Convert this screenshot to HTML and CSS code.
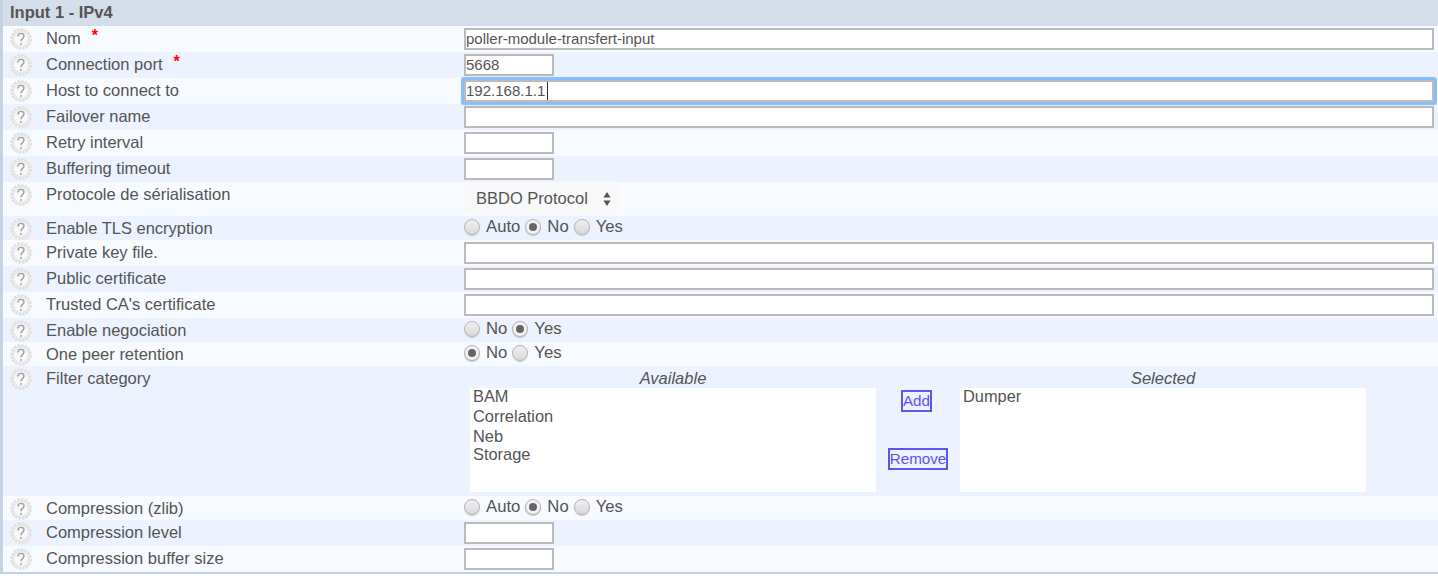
FILE: index.html
```html
<!DOCTYPE html>
<html lang="fr">
<head>
<meta charset="utf-8">
<title>Input 1 - IPv4</title>
<link rel="stylesheet" href="styles.css">
</head>
<body>
<svg class="defs" width="0" height="0" aria-hidden="true">
  <symbol id="help" viewBox="0 0 22 22">
    <circle cx="11" cy="11" r="9.5" fill="#f2f2f2" stroke="#e0e0e0" stroke-width="2.6" stroke-dasharray="2.6 1.1"/>
    <circle cx="11" cy="11" r="7.4" fill="#f9f9f9" stroke="#e2e2e2" stroke-width=".9"/>
    <path d="M8 8.4c0-1.9 1.2-3 3-3s3 1.1 3 2.6c0 2.3-3 2.5-3 5.2" fill="none" stroke="#a0a0a0" stroke-width="1.4"/>
    <circle cx="11" cy="16" r="1" fill="#a0a0a0"/>
  </symbol>
</svg>
<main class="form">
  <h1 class="head">Input 1 - IPv4</h1>

  <div class="row light"><div class="label"><svg class="help"><use href="#help"/></svg><span>Nom</span><b class="req">*</b></div><div class="value"><input class="wide" value="poller-module-transfert-input"></div></div>
  <div class="row dark"><div class="label"><svg class="help"><use href="#help"/></svg><span>Connection port</span><b class="req">*</b></div><div class="value"><input class="small" value="5668"></div></div>
  <div class="row light"><div class="label"><svg class="help"><use href="#help"/></svg><span>Host to connect to</span></div><div class="value"><input class="wide focused" value="192.168.1.1"><i class="caret"></i></div></div>
  <div class="row dark"><div class="label"><svg class="help"><use href="#help"/></svg><span>Failover name</span></div><div class="value"><input class="wide"></div></div>
  <div class="row light"><div class="label"><svg class="help"><use href="#help"/></svg><span>Retry interval</span></div><div class="value"><input class="small"></div></div>
  <div class="row dark"><div class="label"><svg class="help"><use href="#help"/></svg><span>Buffering timeout</span></div><div class="value"><input class="small"></div></div>

  <div class="row light tall"><div class="label"><svg class="help"><use href="#help"/></svg><span>Protocole de sérialisation</span></div>
    <div class="value"><div class="selectbox"><span>BBDO Protocol</span><svg class="updown" viewBox="0 0 8 14"><path d="M4 0l3.6 5.4H.4zM4 14L.4 8.6h7.2z" fill="#555"/></svg></div></div></div>

  <div class="row dark short"><div class="label low"><svg class="help"><use href="#help"/></svg><span>Enable TLS encryption</span></div>
    <div class="value radios"><i class="radio"></i><span>Auto</span><i class="radio on"></i><span>No</span><i class="radio"></i><span>Yes</span></div></div>

  <div class="row light"><div class="label"><svg class="help"><use href="#help"/></svg><span>Private key file.</span></div><div class="value"><input class="wide"></div></div>
  <div class="row dark"><div class="label"><svg class="help"><use href="#help"/></svg><span>Public certificate</span></div><div class="value"><input class="wide"></div></div>
  <div class="row light"><div class="label"><svg class="help"><use href="#help"/></svg><span>Trusted CA's certificate</span></div><div class="value"><input class="wide"></div></div>

  <div class="row dark short"><div class="label low"><svg class="help"><use href="#help"/></svg><span>Enable negociation</span></div>
    <div class="value radios"><i class="radio"></i><span>No</span><i class="radio on"></i><span>Yes</span></div></div>
  <div class="row light short"><div class="label low"><svg class="help"><use href="#help"/></svg><span>One peer retention</span></div>
    <div class="value radios"><i class="radio on"></i><span>No</span><i class="radio"></i><span>Yes</span></div></div>

  <div class="row dark filter"><div class="label"><svg class="help"><use href="#help"/></svg><span>Filter category</span></div>
    <div class="value transfer">
      <div class="pane">
        <em>Available</em>
        <ul class="list"><li>BAM</li><li>Correlation</li><li>Neb</li><li>Storage</li></ul>
      </div>
      <div class="moves"><button class="move add">Add</button><button class="move">Remove</button></div>
      <div class="pane">
        <em>Selected</em>
        <ul class="list"><li>Dumper</li></ul>
      </div>
    </div></div>

  <div class="row light short"><div class="label low"><svg class="help"><use href="#help"/></svg><span>Compression (zlib)</span></div>
    <div class="value radios"><i class="radio"></i><span>Auto</span><i class="radio on"></i><span>No</span><i class="radio"></i><span>Yes</span></div></div>
  <div class="row dark"><div class="label"><svg class="help"><use href="#help"/></svg><span>Compression level</span></div><div class="value"><input class="small"></div></div>
  <div class="row light"><div class="label"><svg class="help"><use href="#help"/></svg><span>Compression buffer size</span></div><div class="value"><input class="small"></div></div>
</main>
</body>
</html>
```

FILE: styles.css
```css
* { box-sizing: border-box; }
html, body { margin: 0; padding: 0; background: #fff; }
body { font-family: "Liberation Sans", Arial, sans-serif; color: #555; font-size: 16.5px; overflow: hidden; }
.defs { display: block; height: 0; }

.form {
  width: 1438px;
  border-left: 3px solid #c3d2e5;
  border-bottom: 2px solid #c3d2e5;
  height: 574px;
}
.head {
  margin: 0;
  height: 26px;
  background: #d4deea;
  font-size: 16.5px;
  font-weight: bold;
  line-height: 24px;
  padding-left: 7px;
  color: #555;
}
.row { display: flex; height: 26px; }
.light { background: #f7faff; }
.dark { background: #ecf2fe; }
.tall { height: 34px; }
.short { height: 24px; }
.filter { height: 130px; }

.label { width: 461px; flex: none; display: flex; align-items: flex-start; height: 26px; padding-top: 3px; line-height: 19px; }
.help { width: 22px; height: 22px; margin: -1px 14px 0 7px; flex: none; position: relative; }
.req { color: #f00; margin-left: 11px; font-size: 16px; line-height: 14px; }

.value { flex: 1; display: flex; align-items: flex-start; padding-top: 2px; position: relative; }
input {
  display: block;
  height: 22px;
  border: 2px solid #bbb;
  background: #fff;
  padding: 0 0 2px;
  font: 15px "Liberation Sans", Arial, sans-serif;
  color: #555;
  outline: none;
  border-radius: 0;
}
.wide { width: 970px; }
.small { width: 90px; }
.focused { box-shadow: 0 0 1px 3px #86bdfb; border-radius: 1px; }
.caret { position: absolute; left: 83px; top: 4px; width: 1px; height: 18px; background: #333; }

.selectbox {
  width: 156px;
  height: 31px;
  margin-top: -1px;
  background: #f8f8f8;
  border-radius: 7px;
  display: flex;
  align-items: center;
  padding-left: 12px;
  font-size: 16.5px;
}
.updown { width: 8px; height: 14px; margin-left: 15px; }

.radios { align-items: center; padding-top: 0; padding-bottom: 3px; font-size: 16.7px; }
.radio {
  width: 16px;
  height: 16px;
  border-radius: 50%;
  border: 1px solid #b4b4b4;
  background: linear-gradient(#f0f0f0, #d8d8d8);
  box-shadow: 0 1px 1px #ccc;
  margin-right: 6px;
  position: relative;
  flex: none;
}
.radio.on { background: #f2f2f2; }
.radio.on::after {
  content: "";
  position: absolute;
  left: 3px; top: 3px;
  width: 8px; height: 8px;
  border-radius: 50%;
  background: #666;
}
.radios span { margin-right: 5px; }

.transfer { padding-top: 3px; padding-left: 6px; }
.pane { width: 406px; flex: none; display: flex; flex-direction: column; }
.pane em { display: block; text-align: center; line-height: 19px; height: 19px; font-size: 16.5px; }
.list {
  list-style: none;
  margin: 0;
  padding: 0 3px;
  height: 104px;
  background: #fff;
  font-size: 16.4px;
}
.list li { height: 20px; line-height: 16px; }
.list li:nth-child(4) { margin-top: -2px; }
.moves { width: 84px; flex: none; display: flex; flex-direction: column; align-items: center; padding-top: 21px; gap: 36px; }
.move {
  height: 22px;
  border: 2px solid #5f55ee;
  background: transparent;
  color: #5f55ee;
  font: 15.2px "Liberation Sans", Arial, sans-serif;
  padding: 0;
  line-height: 18px;
  border-radius: 0;
}
.add { margin-right: 3px; }
```
